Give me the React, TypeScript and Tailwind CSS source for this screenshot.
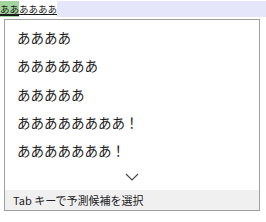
export default function App() {
  const items = ["ああああ", "ああああああ", "あああああ", "ああああああああ！", "あああああああ！"];

  return (
    <div className="w-[266px] h-[222px] bg-white font-['Noto_Sans_CJK_JP',sans-serif] text-[#1a1a1a]">
      {/* Composition line */}
      <div className="flex items-stretch h-[16px] mt-[1px] text-[9.5px] leading-[17px]">
        <span className="bg-[#a3d69e] underline decoration-2 underline-offset-[1px]">ああ</span>
        <span className="underline decoration-1 underline-offset-[1px]">ああああ</span>
        <div className="flex-1 bg-[#e6e6fa]" />
      </div>

      {/* Candidate window */}
      <div className="ml-[4px] mt-[2px] w-[256px] h-[192px] border border-[#a0a0a0] bg-white flex flex-col">
        <div className="pt-[3px] flex flex-col">
          {items.map((t, i) => (
            <div key={i} className="h-[28.3px] flex items-center pl-[12px] text-[13.5px]">
              {t}
            </div>
          ))}
        </div>
        <div className="flex-1 flex items-center justify-center">
          <svg width="14" height="8" viewBox="0 0 14 8" fill="none">
            <polyline points="1,1 7,7 13,1" stroke="#444" strokeWidth="1.1" />
          </svg>
        </div>
        <div className="h-[20px] bg-[#f0f0f0] flex items-center pl-[8px] text-[11px] text-[#222]">
          Tab キーで予測候補を選択
        </div>
      </div>
    </div>
  );
}
